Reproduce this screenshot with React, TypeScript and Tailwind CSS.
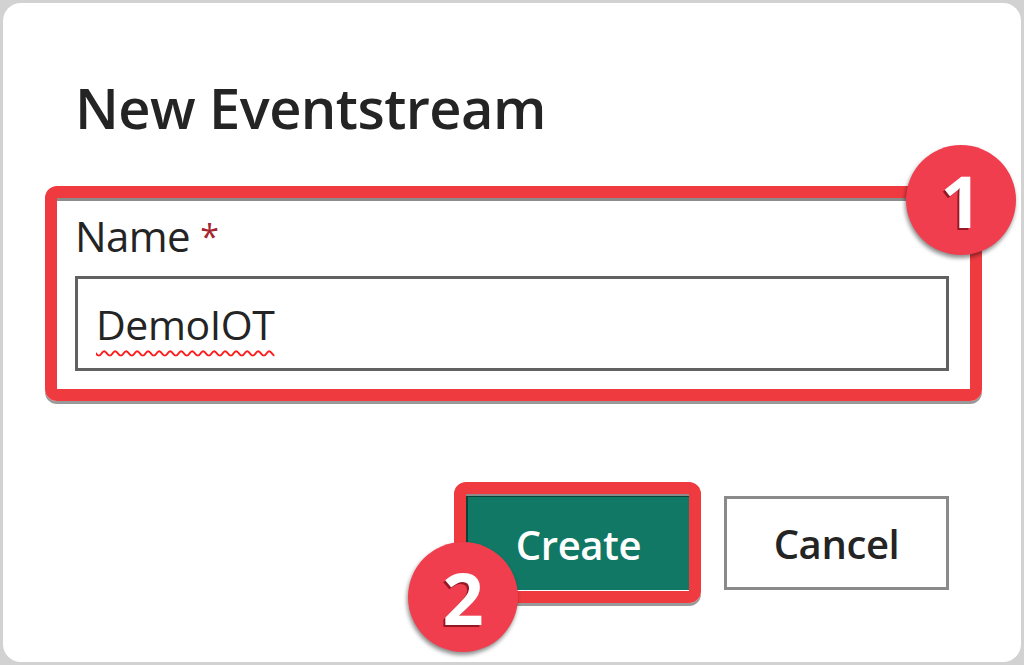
import React from "react";

export default function App() {
  return (
    <div className="w-[1024px] h-[665px] bg-[#d2d2d2] p-[3px] overflow-hidden [font-family:'Open_Sans','Noto_Sans',sans-serif]">
      <div className="h-full w-full bg-white rounded-[18px] px-[72px] pt-[69px] flex flex-col">
        <h1 className="text-[56px] leading-[70px] font-semibold text-[#242424] tracking-[-0.01em]">
          New Eventstream
        </h1>

        <div className="relative mt-[69px]">
          <label className="block text-[42px] leading-[50px] text-[#242424] tracking-[-0.015em]">
            Name <span className="text-[#a4262c] text-[34px] align-top">*</span>
          </label>
          <div className="mt-[15px] h-[95px] border-[3px] border-[#616161] flex items-center pl-[18px]">
            <span className="text-[41px] leading-[50px] text-[#242424] tracking-[-0.01em] underline decoration-wavy decoration-[#ff1a1a] decoration-[1.5px] underline-offset-[10px]">
              DemoIOT
            </span>
          </div>

          {/* highlight 1 */}
          <div className="absolute -left-[30px] -right-[33px] -top-[25px] -bottom-[30px] border-[12px] border-[#ef3b3f] rounded-[12px] shadow-[0_3px_0_rgba(0,0,0,0.4),inset_0_3px_0_rgba(0,0,0,0.45)] pointer-events-none" />
          <div className="absolute left-[831px] -top-[66px] w-[110px] h-[110px] rounded-full bg-[#f13e4e] shadow-[-1px_3px_4px_rgba(0,0,0,0.45)] flex items-center justify-center">
            <span className="text-white font-bold text-[72px] leading-none [text-shadow:-2px_2px_0_rgba(110,10,20,0.7)]">
              1
            </span>
          </div>
        </div>

        <div className="mt-[125px] flex justify-end gap-[33px]">
          <div className="relative">
            <button className="w-[225px] h-[94px] bg-[#117865] text-white text-[40px] font-semibold tracking-[-0.01em] pt-[4px]">
              Create
            </button>
            <div className="absolute -left-[12px] -right-[10px] -top-[14px] -bottom-[13px] border-[12px] border-[#ef3b3f] rounded-[12px] shadow-[0_3px_0_rgba(0,0,0,0.4),inset_2px_3px_0_rgba(0,0,0,0.45)] pointer-events-none" />
            <div className="absolute -left-[58px] top-[46px] w-[110px] h-[110px] rounded-full bg-[#f13e4e] shadow-[-1px_3px_4px_rgba(0,0,0,0.45)] flex items-center justify-center">
              <span className="text-white font-bold text-[72px] leading-none [text-shadow:-2px_2px_0_rgba(110,10,20,0.7)]">
                2
              </span>
            </div>
          </div>
          <button className="w-[225px] h-[94px] bg-white border-[3px] border-[#8a8a8a] text-[#242424] text-[40px] font-semibold tracking-[-0.01em] pt-[2px]">
            Cancel
          </button>
        </div>
      </div>
    </div>
  );
}
